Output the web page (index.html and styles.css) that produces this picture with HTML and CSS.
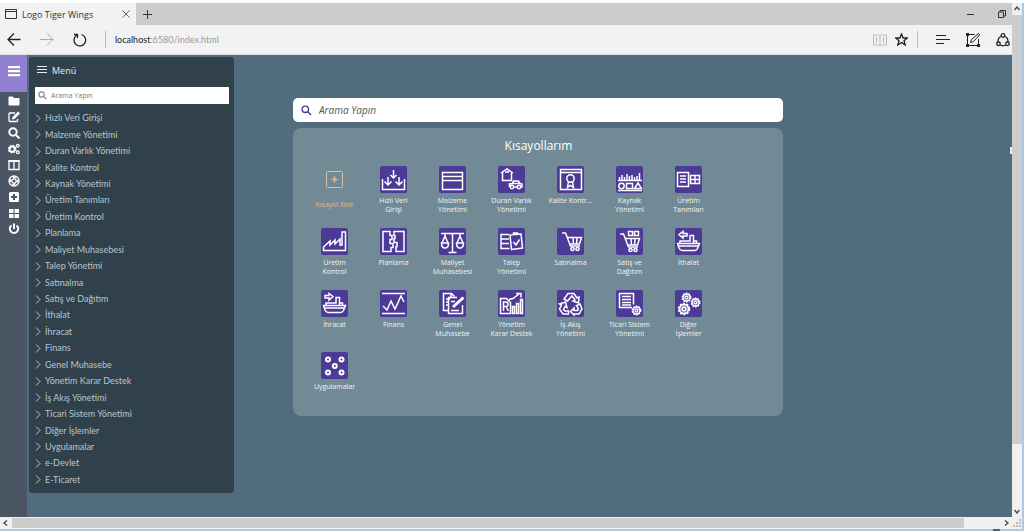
FILE: index.html
```html
<!DOCTYPE html>
<html lang="tr">
<head>
<meta charset="utf-8">
<meta name="viewport" content="width=device-width, initial-scale=1">
<title>Logo Tiger Wings</title>
<link rel="stylesheet" href="styles.css">
</head>
<body>
<svg class="defs" aria-hidden="true">
  <symbol id="chev" viewBox="0 0 6 9"><path d="M1 .5 5 4.500 1 8.500"/></symbol>
  <symbol id="lens" viewBox="0 0 12 12"><circle cx="4.700" cy="4.700" r="3.500"/><path d="M7.300 7.300 11 11"/></symbol>
  <symbol id="gear" viewBox="0 0 12 12"><circle cx="6" cy="6" r="4.600" stroke-width="1.600" stroke-dasharray="1.800 1.100"/><circle cx="6" cy="6" r="3.800"/><circle cx="6" cy="6" r="1.600"/></symbol>
  <symbol id="ship" viewBox="0 0 27 27"><path d="M2.500 15.500h22l-2 5q-1 2-3 2H7q-2 0-3-2.500zM3.500 18h20M5 15.500v-2.500h10V7.500h3.500v8M18.500 13h3v2.500"/></symbol>
  <symbol id="cart" viewBox="0 0 27 27"><path d="M5 5h3.500l5 13h9.500M10.500 9.500h14l-2 6.500H13M16 10l.5 6M20 10l-.5 6"/><circle cx="15.500" cy="21" r="1.600"/><circle cx="20.500" cy="21" r="1.600"/></symbol>
</svg>
<div class="window">
  <header class="chrome">
    <div class="tabs">
      <div class="tab">
        <svg class="line" width="12" height="10" viewBox="0 0 12 10"><path d="M.5.500h11v9H.5zM.5 2.500h11"/></svg>
        <span>Logo Tiger Wings</span>
        <button class="push" aria-label="Sekmeyi kapat"><svg class="line" width="8" height="8" viewBox="0 0 8 8"><path d="M.5.500l7 7M7.500.500l-7 7"/></svg></button>
      </div>
      <button class="newtab" aria-label="Yeni sekme"><svg class="line" width="9" height="9" viewBox="0 0 9 9"><path d="M4.500 0v9M0 4.500h9"/></svg></button>
      <div class="winbtns">
        <button aria-label="Simge durumuna küçült"><svg class="line" width="7" height="8" viewBox="0 0 7 8"><path d="M0 4.500h7"/></svg></button>
        <button aria-label="Önceki boyut"><svg class="line" width="8" height="8" viewBox="0 0 8 8"><path d="M.5 2h5v5.500h-5zM2 2V.500h5.500v5.500H6"/></svg></button>
      </div>
    </div>
    <div class="toolbar">
      <div class="nav">
        <button aria-label="Geri"><svg class="line bold" width="14" height="13" viewBox="0 0 14 13"><path d="M13.500 6.500H1M7 .5l-6 6 6 6"/></svg></button>
        <button class="off" aria-label="İleri"><svg class="line" width="14" height="13" viewBox="0 0 14 13"><path d="M0 6.500h13M7 .5l6 6-6 6"/></svg></button>
        <button aria-label="Yenile"><svg class="line bold" width="14" height="14" viewBox="0 0 14 14"><path d="M8.500 1.500a5.800 5.800 0 1 1-4.500.500M4.500 5V1.500H1"/></svg></button>
      </div>
      <div class="address"><b>localhost</b>:6580/index.html</div>
      <div class="tools">
        <button class="book" aria-label="Okuma görünümü"><svg class="line" width="14" height="12" viewBox="0 0 14 12"><path d="M.5 1h5l1.500 1 1.500-1h5v10h-5L7 12l-1.500-1h-5zM7 2v9M3.500 3v6M10.500 3v6"/></svg></button>
        <button class="star" aria-label="Favorilere ekle"><svg class="line bold" width="13" height="13" viewBox="0 0 13 13"><path d="M6.500 1l1.600 4h4.200L9 7.700l1.200 4.300-3.700-2.500L2.800 12 4 7.700.700 5h4.200z"/></svg></button>
        <button aria-label="Merkez"><svg class="line" width="14" height="11" viewBox="0 0 14 11"><path d="M0 1.500h10M0 5.500h14M0 9.500h8"/></svg></button>
        <button aria-label="Web notu"><svg class="line" width="14" height="14" viewBox="0 0 14 14"><path d="M8.500 1.500h-7v11h11V6M4.500 9.500l1-3 7-6L13.500 2 7.500 8.500z"/><path class="solid" d="M0 0h3v3H0zM0 11h3v3H0zM11 11h3v3h-3z"/></svg></button>
        <button aria-label="Paylaş"><svg class="line bold" width="14" height="14" viewBox="0 0 14 14"><path d="M5 3.500q-3 1-3 5.500M9 3.500q3 1 3 5.500M4 12q3 1.500 6 0"/><circle cx="7" cy="2.500" r="1.800"/><circle cx="2.500" cy="10.800" r="1.800"/><circle cx="11.500" cy="10.800" r="1.800"/></svg></button>
      </div>
    </div>
  </header>

  <div class="page">
    <nav class="rail" aria-label="Araçlar">
      <button class="burger" aria-label="Menü"><svg width="12" height="11" viewBox="0 0 12 11"><path d="M0 0h12v2.300H0zM0 4h12v2.300H0zM0 8h12v2.300H0z"/></svg></button>
      <button aria-label="Klasör"><svg width="12" height="12" viewBox="0 0 12 12"><path d="M.5 2.500q0-1 1-1h3l1.500 1.500h4.500q1 0 1 1v5.500q0 1-1 1h-9q-1 0-1-1z"/></svg></button>
      <button aria-label="Düzenle"><svg width="12" height="12" viewBox="0 0 12 12"><path class="s" d="M7 2H2Q1 2 1 3v6.500q0 1 1 1h6.500q1 0 1-1V8"/><path d="M4 8.500l.5-2.500L10 .5 12 2.500 6.500 8z"/></svg></button>
      <button aria-label="Ara"><svg width="12" height="12" viewBox="0 0 12 12"><circle class="s2" cx="5" cy="5" r="3.700"/><path class="s2" d="M8 8l3.500 3.500"/></svg></button>
      <button aria-label="Ayarlar"><svg width="12" height="12" viewBox="0 0 12 12"><circle class="s2" cx="4.200" cy="6.200" r="2.600"/><circle class="s" cx="4.200" cy="6.200" r="3.700" stroke-dasharray="1.600 1.300"/><circle class="s" cx="9.800" cy="2.800" r="1.400"/><circle class="s" cx="9.800" cy="9.300" r="1.400"/></svg></button>
      <button aria-label="Sütunlar"><svg width="12" height="12" viewBox="0 0 12 12"><path class="s" d="M1 2h10v8.500H1zM6 2v8"/><path d="M.5 1h11v2H.5z"/></svg></button>
      <button aria-label="Yardım"><svg width="12" height="12" viewBox="0 0 12 12"><circle class="s" cx="6" cy="6" r="5"/><circle class="s" cx="6" cy="6" r="2.200"/><circle class="s2" cx="6" cy="6" r="3.700" stroke-dasharray="2.900 2.900" stroke-dashoffset="1.450"/></svg></button>
      <button aria-label="Ekle"><svg width="12" height="12" viewBox="0 0 12 12"><path fill-rule="evenodd" d="M2.500 1h7Q11 1 11 2.500v7Q11 11 9.500 11h-7Q1 11 1 9.500v-7Q1 1 2.500 1zM5 3v2H3v2h2v2h2V7h2V5H7V3z"/></svg></button>
      <button aria-label="Pencereler"><svg width="12" height="12" viewBox="0 0 12 12"><path d="M1 2h4.500v4H1zM6.500 2H11v4H6.500zM1 7h4.500v4H1zM6.500 7H11v4H6.500z"/></svg></button>
      <button aria-label="Çıkış"><svg width="12" height="12" viewBox="0 0 12 12"><path class="s2" d="M3.500 2.500a4.200 4.200 0 1 0 5 0M6 .5V6"/></svg></button>
    </nav>

    <aside class="menu">
      <h2><svg class="line" width="10" height="8" viewBox="0 0 10 8"><path d="M0 .5h10M0 3.500h10M0 6.500h10"/></svg>Menü</h2>
      <label class="menusearch"><svg class="line" width="9" height="9"><use href="#lens"/></svg><input type="text" aria-label="Menüde ara" placeholder="Arama Yapın"></label>
      <ul>
        <li><a href="#"><svg><use href="#chev"/></svg>Hızlı Veri Girişi</a></li>
        <li><a href="#"><svg><use href="#chev"/></svg>Malzeme Yönetimi</a></li>
        <li><a href="#"><svg><use href="#chev"/></svg>Duran Varlık Yönetimi</a></li>
        <li><a href="#"><svg><use href="#chev"/></svg>Kalite Kontrol</a></li>
        <li><a href="#"><svg><use href="#chev"/></svg>Kaynak Yönetimi</a></li>
        <li><a href="#"><svg><use href="#chev"/></svg>Üretim Tanımları</a></li>
        <li><a href="#"><svg><use href="#chev"/></svg>Üretim Kontrol</a></li>
        <li><a href="#"><svg><use href="#chev"/></svg>Planlama</a></li>
        <li><a href="#"><svg><use href="#chev"/></svg>Maliyet Muhasebesi</a></li>
        <li><a href="#"><svg><use href="#chev"/></svg>Talep Yönetimi</a></li>
        <li><a href="#"><svg><use href="#chev"/></svg>Satınalma</a></li>
        <li><a href="#"><svg><use href="#chev"/></svg>Satış ve Dağıtım</a></li>
        <li><a href="#"><svg><use href="#chev"/></svg>İthalat</a></li>
        <li><a href="#"><svg><use href="#chev"/></svg>İhracat</a></li>
        <li><a href="#"><svg><use href="#chev"/></svg>Finans</a></li>
        <li><a href="#"><svg><use href="#chev"/></svg>Genel Muhasebe</a></li>
        <li><a href="#"><svg><use href="#chev"/></svg>Yönetim Karar Destek</a></li>
        <li><a href="#"><svg><use href="#chev"/></svg>İş Akış Yönetimi</a></li>
        <li><a href="#"><svg><use href="#chev"/></svg>Ticari Sistem Yönetimi</a></li>
        <li><a href="#"><svg><use href="#chev"/></svg>Diğer İşlemler</a></li>
        <li><a href="#"><svg><use href="#chev"/></svg>Uygulamalar</a></li>
        <li><a href="#"><svg><use href="#chev"/></svg>e-Devlet</a></li>
        <li><a href="#"><svg><use href="#chev"/></svg>E-Ticaret</a></li>
      </ul>
    </aside>

    <main>
      <label class="search"><svg class="line" width="11" height="11"><use href="#lens"/></svg><input type="text" aria-label="Ara" placeholder="Arama Yapın"></label>
      <section class="shortcuts">
        <h1>Kısayollarım</h1>
        <div class="grid">
          <button class="tile add"><svg viewBox="0 0 27 27"><rect x="5.500" y="5.500" width="16" height="16" rx="1"/><path d="M13.500 10.500v6M10.500 13.500h6" stroke-width="1.600"/></svg><span>Kısayol Ekle</span></button>
          <button class="tile"><svg viewBox="0 0 27 27"><path d="M2.500 13v10.500h22V13M13.500 4v8M10.500 9l3 3 3-3M8 11v8M4.500 15.500 8 19l3.500-3.500M19 11v8M15.500 15.500 19 19l3.500-3.500"/></svg><span>Hızlı Veri<br>Girişi</span></button>
          <button class="tile"><svg viewBox="0 0 27 27"><path d="M3.500 6.500h20v17h-20zM3.500 10.500h20M3.500 14.500h20"/></svg><span>Malzeme Yönetimi</span></button>
          <button class="tile"><svg viewBox="0 0 27 27"><path d="M3 7l6-4 6 4M4.500 6.500v8h9v-8M7 6h4M11.500 21v-3l3-.5 1-2.500h5l1.500 2.500 2 .5v3h-2M16 21h3M14 17.500h8"/><circle cx="14" cy="21" r="1.700"/><circle cx="21" cy="21" r="1.700"/></svg><span>Duran Varlık Yönetimi</span></button>
          <button class="tile"><svg viewBox="0 0 27 27"><path d="M3.500 3.500h21v20h-21zM3.500 6.500h21M11.500 15.500l-1 6 3-2 3 2-1-6"/><circle cx="13.500" cy="12.500" r="3.700"/></svg><span>Kalite Kontr...</span></button>
          <button class="tile"><svg viewBox="0 0 27 27"><path d="M2 14.500h24M3.500 11v3M6 9v5M8.500 11v3M11 8v6M13.500 10v4M16 9v5M18.500 11v3M21 10v4M23.500 7v7M2 24.500h24M10.500 17.500h6v5h-6zM22 17l-3.500 5.500h7z"/><circle cx="5.500" cy="20" r="2.700"/></svg><span>Kaynak Yönetimi</span></button>
          <button class="tile"><svg viewBox="0 0 27 27"><path d="M2.500 6.500h11v14h-11zM5 10h6M5 13h6M5 16h6M15.500 9.500h9v8h-9zM20 9.500v8M15.500 13.500h9"/></svg><span>Üretim Tanımları</span></button>
          <button class="tile"><svg viewBox="0 0 27 27"><path d="M2.500 22.500h22V4h-3.500v13h-2V11l-5 5v-4l-5 5v-4l-6.500 6z"/></svg><span>Üretim Kontrol</span></button>
          <button class="tile"><svg viewBox="0 0 27 27"><path d="M3 3.500h7v4h2v4h-2v4h3v4h-2v4H3zM14 3.500h10v20h-8v-5h1v-4h-3v-4h1v-3h-1z"/></svg><span>Planlama</span></button>
          <button class="tile"><svg viewBox="0 0 27 27"><path d="M2 5.500h23M13.500 5v19M9.500 24.500h8M6 6v2L3 15M6 8l3 7M21 6v2l-3 7M21 8l3 7M2.500 15h7q0 5-3.500 5t-3.500-5zM17.500 15h7q0 5-3.500 5t-3.500-5z"/></svg><span>Maliyet Muhasebesi</span></button>
          <button class="tile"><svg viewBox="0 0 27 27"><path d="M11 6.500H3v14h8.500M3 11h8M3 15.500h8M12 7l11-1 1.500 14-11 1.500zM15.500 7V5h4v2M15.500 14l2.500 3 3.500-5.500"/></svg><span>Talep Yönetimi</span></button>
          <button class="tile"><svg><use href="#cart"/></svg><span>Satınalma</span></button>
          <button class="tile"><svg viewBox="0 0 27 27"><use href="#cart" x="-1" y="1" width="27" height="27"/><path d="M12.500 3.500h4v4h-4zM18.500 3.500h4v4h-4z"/></svg><span>Satış ve Dağıtım</span></button>
          <button class="tile"><svg viewBox="0 0 27 27"><use href="#ship" width="27" height="27"/><path d="M4 6.500l4-3v2h4v2.500H8v2z"/></svg><span>İthalat</span></button>
          <button class="tile"><svg viewBox="0 0 27 27"><use href="#ship" width="27" height="27"/><path d="M12 6.500l-4-3v2H4v2.500h4v2z"/></svg><span>İhracat</span></button>
          <button class="tile"><svg viewBox="0 0 27 27"><path d="M2 3.500h23M2 23.500h23M3 16l4 4 4-9 4 8 6-13 3 6"/></svg><span>Finans</span></button>
          <button class="tile"><svg viewBox="0 0 27 27"><path d="M9 20.500H4.500v-17h8l3 3M12 3.500v4M7 9h4M7 12h3M7 15h3M18 7.500H9.500v16h14V15M12 20.500h8M12 11.500h4"/><path d="M24.500 7.500 14 17" stroke-width="3"/></svg><span>Genel Muhasebe</span></button>
          <button class="tile"><svg viewBox="0 0 27 27"><path d="M12.500 23.500h-10v-15h6l4 4zM5.500 21v-9h2.500q2 0 2 2.300t-2 2.300H5.500M8 16.500l2.500 4.500M14.500 23.500v-7h2v7zM18.500 23.500v-10h2v10zM22.500 23.500v-14h2v14zM11 9.500l4-1 6-4.500M18 3.500h5v4"/></svg><span>Yönetim<br>Karar Destek</span></button>
          <button class="tile"><svg viewBox="0 0 27 27"><path d="M7 9l4-5.500h6L20 8l2-1-.5 6-5.500-2 2-1.200L15 6l-4.500 5zM23 14l2 5-3 5h-5v1l-3.500-3.500 3.500-3.500v2.500h3.500L21.500 19l-2-3.500zM11.500 24H6l-3.500-5 2-4-2-1 6-2 1.500 5.500-2-1-1.500 3 1.500 1.500h3.500z"/></svg><span>İş Akış Yönetimi</span></button>
          <button class="tile"><svg viewBox="0 0 27 27"><path d="M16 17.500H3.500v-14h14v11M6 6.500h9M6 9.500h9M6 12.500h9M6 15h9"/><use href="#gear" x="15" y="15" width="11" height="11"/></svg><span>Ticari Sistem Yönetimi</span></button>
          <button class="tile"><svg viewBox="0 0 27 27"><use href="#gear" x="6" y="2" width="11" height="11"/><use href="#gear" x="15" y="7" width="11" height="11"/><use href="#gear" x="2" y="12" width="14" height="14"/></svg><span>Diğer<br>İşlemler</span></button>
          <button class="tile"><svg viewBox="0 0 27 27" class="thick"><circle cx="7" cy="7.500" r="2"/><circle cx="20.500" cy="7.500" r="2"/><circle cx="13.800" cy="14" r="2"/><circle cx="7" cy="20.500" r="2"/><circle cx="20.500" cy="20.500" r="2"/></svg><span>Uygulamalar</span></button>
        </div>
      </section>
    </main>
    <i class="edge"></i>
  </div>

  <div class="hbar"><svg width="5" height="6" viewBox="0 0 5 6"><path d="M4 .5 1 3l3 2.500"/></svg><i></i><svg width="5" height="6" viewBox="0 0 5 6"><path d="M1 .5 4 3 1 5.500"/></svg></div>
  <div class="vbar"><svg width="6" height="5" viewBox="0 0 6 5"><path d="M.5 4 3 1l2.500 3"/></svg><i></i><svg width="6" height="5" viewBox="0 0 6 5"><path d="M.5 1 3 4l2.500-3"/></svg></div>
  <div class="grip"><svg width="8" height="8" viewBox="0 0 8 8"><path d="M6 0h2v2H6zM3 3h2v2H3zM6 3h2v2H6zM0 6h2v2H0zM3 6h2v2H3zM6 6h2v2H6z"/></svg></div>
  <div class="below"><i></i></div>
</div>
</body>
</html>
```

FILE: styles.css
```css
* { box-sizing: border-box; }
body {
  margin: 0;
  font-family: "Open Sans", "Noto Sans", sans-serif;
  font-size: 9px;
  color: #333;
  background: #fff;
}
button { border: 0; padding: 0; background: none; font: inherit; color: inherit; display: flex; align-items: center; justify-content: center; }
input { border: 0; padding: 0; background: none; outline: 0; min-width: 0; flex: 1; font: inherit; }
h1, h2, ul { margin: 0; padding: 0; font-weight: 400; list-style: none; }
.defs { position: absolute; width: 0; height: 0; }
.line { fill: none; stroke: currentColor; stroke-width: 1; flex: none; }
.bold { stroke-width: 1.3; }
.solid { fill: currentColor; stroke: none; }

.window {
  height: 100vh;
  padding-top: 3px;
  display: grid;
  grid-template-columns: minmax(0, 1fr) 12px;
  grid-template-rows: auto minmax(0, 1fr) 12px 2px;
}

/* Browser frame */
.chrome { grid-column: 1; }
.tabs { display: flex; height: 22px; background: #ccc; }
.tab { width: 136px; display: flex; align-items: center; gap: 5px; padding: 0 6px 0 5px; background: #f2f2f2; font-size: 9px; }
.push { margin-left: auto; color: #666; }
.newtab { width: 22px; }
.winbtns { margin-left: auto; display: flex; gap: 24px; padding-right: 6px; }
.toolbar { height: 30px; display: flex; align-items: center; background: #f2f2f2; border-bottom: 1px solid #dcdcdc; color: #222; }
.nav { display: flex; align-items: center; gap: 19px; padding: 0 18px 0 7px; }
.off { color: #aaa; }
.address { border-left: 1px solid #bbb; padding-left: 9px; line-height: 17px; color: #999; font-family: Lato, "Open Sans", sans-serif; }
.address b { color: #222; font-weight: 400; }
.tools { margin-left: auto; display: flex; align-items: center; gap: 16px; padding-right: 2px; }
.book { color: #bbb; }
.star { margin-left: -8px; margin-right: 2px; padding-right: 9px; border-right: 1px solid #bbb; height: 17px; }

/* Application */
.page { grid-column: 1; display: flex; position: relative; background: #506c7e; min-height: 0; }
.edge { position: absolute; right: 0; top: 92px; width: 2px; height: 7px; background: #e6ebee; }
.rail { width: 27px; flex: none; background: #4b5665; }
.rail button { width: 100%; height: 16px; }
.rail .burger { height: 37px; padding-bottom: 4px; margin-bottom: 1px; background: #9280d3; }
.rail svg { fill: #fff; }
.s, .s2 { fill: none; stroke: #fff; stroke-width: 1.3; }
.s2 { stroke-width: 2; }

.menu { width: 205px; flex: none; margin: 2px 0 24px 2px; padding: 0 5px 5px 6px; display: flex; flex-direction: column; background: #30414b; border-radius: 3px; color: #b9c5cc; }
.menu h2 { height: 26px; display: flex; align-items: center; gap: 5px; padding-left: 2px; font-size: 9px; color: #e4eaed; }
.menusearch { height: 17px; margin: 4px 0 6px; display: flex; align-items: center; gap: 4px; padding: 0 3px; background: #fff; font-size: 7px; color: #888; }
.menusearch input::placeholder { color: #777; opacity: 1; }
.menu ul { flex: 1; display: flex; flex-direction: column; font-family: Lato, "Open Sans", sans-serif; }
.menu li { flex: 1; display: flex; align-items: center; line-height: 12px; }
.menu a { display: flex; align-items: center; gap: 4px; color: inherit; text-decoration: none; }
.menu li svg { width: 6px; height: 9px; fill: none; stroke: #b7c4cb; stroke-width: 1; }

main { flex: 1; min-width: 0; padding: 43px 229px 0 59px; }
.search { height: 24px; display: flex; align-items: center; gap: 7px; padding: 0 8px; background: #fff; border-radius: 5px; color: #4b3a96; font-size: 10px; }
.search .line, .menusearch .line { stroke-width: 1.5; }
.search input { font-style: italic; color: #555; }
.search input::placeholder { color: #555; opacity: 1; }
.shortcuts { margin-top: 6px; padding: 8px 11px 2px 12px; background: #728a95; border-radius: 8px; color: #fff; }
.shortcuts h1 { text-align: center; font-size: 12px; line-height: 20px; }
.grid { display: grid; grid-template-columns: repeat(auto-fill, 59px); grid-auto-rows: 62px; margin-top: 10px; }
.tile { flex-direction: column; justify-content: flex-start; gap: 3px; font-size: 7px; line-height: 9px; color: #f0f4f6; }
.tile svg { width: 27px; height: 27px; flex: none; background: #4b3a96; border-radius: 2px; fill: none; stroke: #fff; stroke-width: 1.5; }
.tile span { width: 48px; }
.tile .thick { stroke-width: 2; }
.tile.add { gap: 7px; color: #e8b684; }
.tile.add svg { background: none; stroke: #dcbd98; stroke-width: 1; }

/* Scroll bars */
.hbar { grid-column: 1; grid-row: 3; display: flex; align-items: center; gap: 4px; padding: 0 3px; background: #f0f0f0; }
.hbar i { flex: 1; margin-right: 36px; height: 10px; background: #cdcdcd; }
.vbar { grid-column: 2; grid-row: 1 / 3; display: flex; flex-direction: column; align-items: center; gap: 4px; padding: 3px 0; background: #f0f0f0; border-right: 2px solid #a9c9e4; }
.vbar i { flex: 1; width: 10px; margin-bottom: 61px; background: #cdcdcd; }
.hbar svg, .vbar svg { flex: none; fill: none; stroke: #444; stroke-width: 1.3; }
.grip { grid-column: 2; grid-row: 3; display: flex; align-items: center; justify-content: center; background: #f0f0f0; border-right: 2px solid #a9c9e4; }
.grip svg { fill: #bbb; }
.below { grid-column: 1 / 3; grid-row: 4; display: flex; justify-content: flex-end; padding-right: 24px; background: #b4cbdc; }
.below i { width: 7px; background: #1c6fb5; }
```
